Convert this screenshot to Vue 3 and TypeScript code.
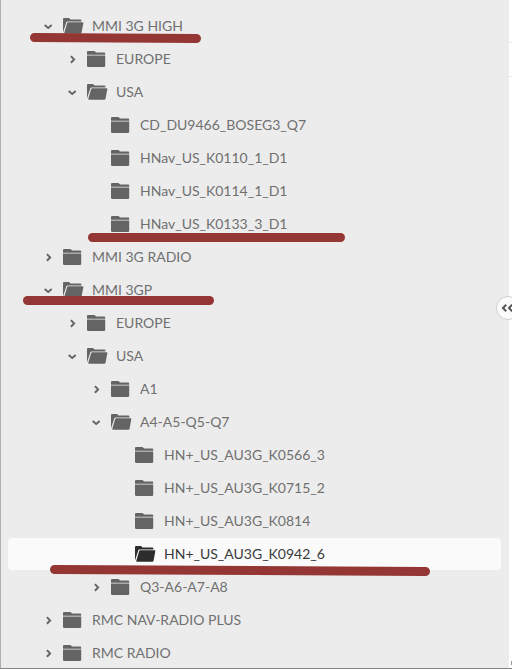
<script setup lang="ts">
interface TreeNode {
  label: string
  depth: number
  state: 'open' | 'closed' | 'leaf'
  selected?: boolean
}

const nodes: TreeNode[] = [
  { label: 'MMI 3G HIGH', depth: 0, state: 'open' },
  { label: 'EUROPE', depth: 1, state: 'closed' },
  { label: 'USA', depth: 1, state: 'open' },
  { label: 'CD_DU9466_BOSEG3_Q7', depth: 2, state: 'leaf' },
  { label: 'HNav_US_K0110_1_D1', depth: 2, state: 'leaf' },
  { label: 'HNav_US_K0114_1_D1', depth: 2, state: 'leaf' },
  { label: 'HNav_US_K0133_3_D1', depth: 2, state: 'leaf' },
  { label: 'MMI 3G RADIO', depth: 0, state: 'closed' },
  { label: 'MMI 3GP', depth: 0, state: 'open' },
  { label: 'EUROPE', depth: 1, state: 'closed' },
  { label: 'USA', depth: 1, state: 'open' },
  { label: 'A1', depth: 2, state: 'closed' },
  { label: 'A4-A5-Q5-Q7', depth: 2, state: 'open' },
  { label: 'HN+_US_AU3G_K0566_3', depth: 3, state: 'leaf' },
  { label: 'HN+_US_AU3G_K0715_2', depth: 3, state: 'leaf' },
  { label: 'HN+_US_AU3G_K0814', depth: 3, state: 'leaf' },
  { label: 'HN+_US_AU3G_K0942_6', depth: 3, state: 'leaf', selected: true },
  { label: 'Q3-A6-A7-A8', depth: 2, state: 'closed' },
  { label: 'RMC NAV-RADIO PLUS', depth: 0, state: 'closed' },
  { label: 'RMC RADIO', depth: 0, state: 'closed' },
]
</script>

<template>
  <div class="page">
    <aside class="panel">
      <ul class="tree">
        <li
          v-for="(node, i) in nodes"
          :key="i"
          class="row"
          :class="{ selected: node.selected }"
          :style="{ paddingLeft: 32 + node.depth * 24 + 'px' }"
        >
          <span class="toggle">
            <svg v-if="node.state === 'open'" width="16" height="16" viewBox="0 0 16 16">
              <path class="chevron" d="M4.7 7 8.2 10 11.7 7" />
            </svg>
            <svg v-else-if="node.state === 'closed'" width="16" height="16" viewBox="0 0 16 16">
              <path class="chevron" d="M6.9 5.1 10.1 8.4 6.9 11.7" />
            </svg>
          </span>
          <svg class="folder" width="22" height="18" viewBox="0 0 22 18">
            <template v-if="node.state === 'open' || node.selected">
              <path d="M0 15.6V2Q0 1 1 1H5.6Q6.4 1 6.9 1.7L7.5 2.5H17.4Q18.4 2.5 18.4 3.5V4.4H4.5Q3.6 4.4 3.3 5.3Z" />
              <path d="M5.4 5.3H19.5Q20.5 5.3 20.3 6.3L18.6 15.6Q18.4 16.8 17.3 16.8H2Q1.1 16.8 1.3 15.8L4.1 6.3Q4.4 5.3 5.4 5.3Z" />
            </template>
            <template v-else>
              <path d="M0 4.7V2Q0 1 1 1H7Q7.8 1 8.4 1.7L9.1 2.5H17.2Q18.2 2.5 18.2 3.5V4.7Z" />
              <path d="M0 5.4H18.2V15.7Q18.2 17 17 17H1.2Q0 17 0 15.7Z" />
            </template>
          </svg>
          <span class="label">{{ node.label }}</span>
        </li>
      </ul>
    </aside>
    <main class="content">
      <span class="rule first"></span>
      <span class="rule second"></span>
      <span class="speck"></span>
    </main>
    <button class="collapse" aria-label="Collapse">
      <svg width="22" height="22" viewBox="0 0 22 22">
        <path d="M9.2 7.7 6 11 9.2 14.3M15.2 7.7 12 11 15.2 14.3" />
      </svg>
    </button>
    <svg class="marks" width="512" height="669" viewBox="0 0 512 669">
      <path d="M34.5 37.5 196.5 38.5" />
      <path d="M92.5 237.5H340.5" />
      <path d="M27.5 300.5H209.5" />
      <path d="M54.5 569.5 425.5 571.5" />
    </svg>
  </div>
</template>

<style>
body {
  margin: 0;
}
</style>

<style scoped>
.page {
  position: relative;
  display: flex;
  box-sizing: border-box;
  width: 512px;
  height: 669px;
  overflow: hidden;
  background: #fff;
  border-bottom: 1px solid #858585;
  font-family: Lato, sans-serif;
}
.panel {
  flex: 0 0 509px;
  box-sizing: border-box;
  padding: 10px 8px 0 7px;
  background: #ececec;
  border-left: 1px solid #b0b0b0;
}
.tree {
  display: flex;
  flex-direction: column;
  gap: 1px;
  margin: 0;
  padding: 0;
  list-style: none;
}
.row {
  display: flex;
  align-items: center;
  box-sizing: border-box;
  height: 32px;
  border-radius: 4px;
  color: #707070;
  font-size: 14px;
}
.row.selected {
  background: #fafafa;
  color: #3a3a3a;
}
.toggle {
  flex: 0 0 16px;
  height: 16px;
  margin-right: 7px;
}
.toggle svg {
  display: block;
}
.chevron {
  fill: none;
  stroke: #666;
  stroke-width: 2;
}
.folder {
  flex: none;
  margin-right: 7px;
  fill: #646464;
}
.selected .folder {
  fill: #2c2c2c;
}
.label {
  padding-bottom: 1px;
  line-height: 19px;
  white-space: nowrap;
}
.content {
  display: flex;
  flex: 1;
  flex-direction: column;
}
.rule {
  height: 1px;
  background: #e8e8e8;
}
.first {
  margin-top: 42px;
}
.second {
  margin-top: 33px;
}
.speck {
  align-self: flex-end;
  width: 1px;
  height: 4px;
  margin-top: auto;
  margin-bottom: 3px;
  background: #999;
}
.collapse {
  position: absolute;
  left: 496px;
  top: 296px;
  width: 24px;
  height: 24px;
  padding: 0;
  border: 1px solid #d0d0d0;
  border-radius: 50%;
  background: #fbfbfb;
}
.collapse svg {
  display: block;
  fill: none;
  stroke: #555;
  stroke-width: 2;
}
.marks {
  position: absolute;
  inset: 0;
  fill: none;
  stroke: #943634;
  stroke-width: 9;
  stroke-linecap: round;
  pointer-events: none;
}
</style>
